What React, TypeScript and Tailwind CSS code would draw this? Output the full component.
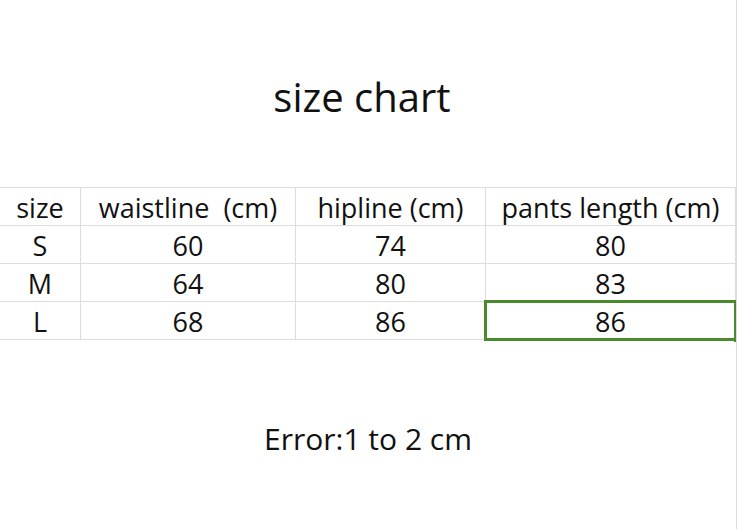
import React from "react";

const rows = [
  ["S", "60", "74", "80"],
  ["M", "64", "80", "83"],
  ["L", "68", "86", "86"],
];
const header = ["size", "waistline  (cm)", "hipline (cm)", "pants length (cm)"];

export default function App() {
  return (
    <div
      className="w-[737px] h-[529px] bg-white text-[#111] overflow-hidden flex flex-col border-r border-[#dcdcdc]"
      style={{ fontFamily: '"Open Sans", "Noto Sans CJK SC", sans-serif' }}
    >
      <div className="h-[187px] flex items-center justify-center pr-[12px] pt-[6px]">
        <div className="text-[40px] leading-none">size chart</div>
      </div>
      <div className="grid grid-cols-[81px_215px_190px_250px] border-t border-[#dcdcdc]">
        {header.map((h, i) => (
          <div
            key={i}
            className="h-[38px] flex items-center justify-center pt-[2px] border-b border-r border-[#dcdcdc] text-[27px] whitespace-pre leading-none"
          >
            {h}
          </div>
        ))}
        {rows.map((r, ri) => (
          <React.Fragment key={ri}>
            {r.map((c, ci) => (
              <div
                key={ci}
                className="relative h-[38px] flex items-center justify-center pt-[2px] border-b border-r border-[#dcdcdc] text-[27px] leading-none"
              >
                {c}
                {ri === 2 && ci === 3 && (
                  <>
                    <div className="absolute left-[-2px] top-[-2px] right-[-2px] bottom-[-2px] border-[3px] border-[#4a8a2c]" />
                    <div className="absolute right-[-3px] bottom-[-3px] w-[4px] h-[4px] bg-[#4a8a2c]" />
                  </>
                )}
              </div>
            ))}
          </React.Fragment>
        ))}
      </div>
      <div className="h-[114px] flex items-end justify-center">
        <div className="text-[30px] leading-none">Error:1 to 2 cm</div>
      </div>
    </div>
  );
}
